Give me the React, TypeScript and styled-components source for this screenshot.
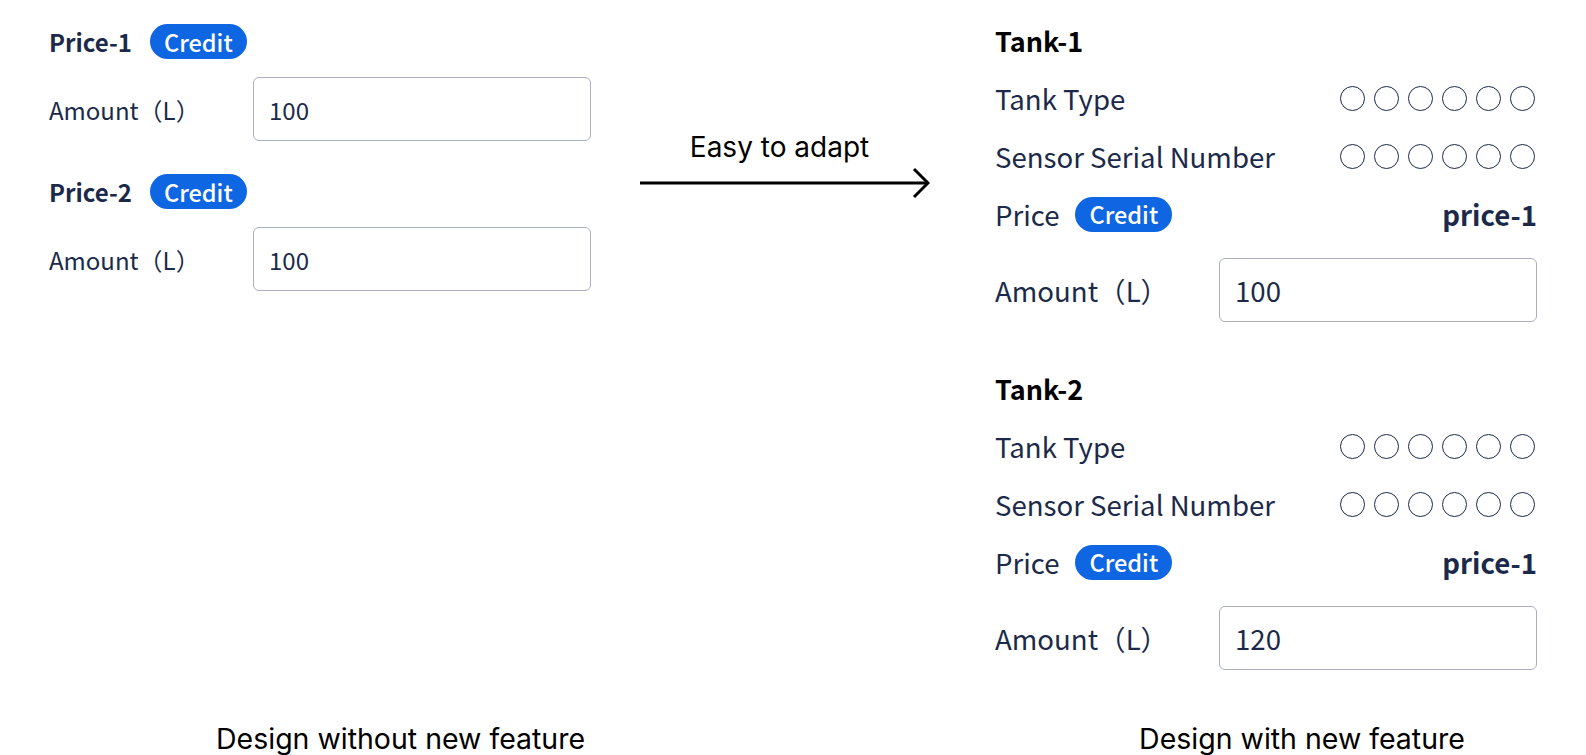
import styled, { createGlobalStyle } from 'styled-components';

const GlobalStyle = createGlobalStyle`
  html, body {
    margin: 0;
    padding: 0;
    background: #fff;
  }
  body {
    font-family: 'Noto Sans CJK SC', 'Noto Sans', sans-serif;
    color: #1b2a4a;
  }
`;

const NAVY = '#1b2a4a';
const BLUE = '#0f66e3';

const Page = styled.div`
  width: 1586px;
  height: 755px;
  box-sizing: border-box;
  padding: 24px 49px 0 49px;
  display: flex;
  flex-direction: column;
`;

const Top = styled.div`
  display: grid;
  grid-template-columns: 542px 49px 290px 65px 542px;
`;

const LeftCol = styled.div`
  grid-column: 1;
  display: flex;
  flex-direction: column;
  gap: 33px;
`;

const PriceGroup = styled.div`
  display: flex;
  flex-direction: column;
  gap: 18px;
`;

const HeaderRow = styled.div`
  display: flex;
  align-items: center;
  gap: 18px;
  height: 35px;
`;

const PriceName = styled.span`
  font-size: 24px;
  font-weight: 700;
  color: ${NAVY};
`;

const Badge = styled.span`
  display: inline-flex;
  align-items: center;
  justify-content: center;
  height: 35px;
  padding: 0 14px;
  box-sizing: border-box;
  border-radius: 18px;
  background: ${BLUE};
  color: #fff;
  font-size: 23.5px;
  font-weight: 500;
`;

const FieldRow = styled.div<{ $label: number; $size: number }>`
  display: grid;
  grid-template-columns: ${(p) => p.$label}px 1fr;
  align-items: center;
  font-size: ${(p) => p.$size}px;
  color: ${NAVY};
`;

const Field = styled.div`
  height: 64px;
  box-sizing: border-box;
  border: 1.8px solid #abb0bf;
  border-radius: 6px;
  padding: 0 15px;
  display: flex;
  align-items: center;
  color: ${NAVY};
`;

const MidCol = styled.div`
  grid-column: 3;
  display: flex;
  flex-direction: column;
  align-items: center;
  padding-top: 106px;
  gap: 2px;
`;

const AdaptText = styled.div`
  font-family: Inter, 'Liberation Sans', sans-serif;
  font-size: 28px;
  font-weight: 400;
  color: #000;
  line-height: 34px;
  margin-left: -11px;
`;

const RightCol = styled.div`
  grid-column: 5;
  display: flex;
  flex-direction: column;
  gap: 50px;
`;

const Tank = styled.div`
  display: flex;
  flex-direction: column;
`;

const TankTitle = styled.div`
  height: 36px;
  margin-top: -2px;
  display: flex;
  align-items: center;
  font-size: 27px;
  font-weight: 700;
  color: #000;
`;

const InfoRow = styled.div`
  height: 36px;
  margin-top: 22px;
  display: flex;
  align-items: center;
  justify-content: space-between;
  font-size: 27.6px;
  color: ${NAVY};
`;

const LabelWithBadge = styled.div`
  display: flex;
  align-items: center;
  gap: 16px;
`;

const Strong = styled.span`
  font-weight: 700;
`;

const Dots = styled.div`
  display: flex;
  gap: 9px;
  margin-right: 2px;
`;

const Dot = styled.span`
  width: 25px;
  height: 25px;
  box-sizing: border-box;
  border: 1.4px solid ${NAVY};
  border-radius: 50%;
`;

const TankField = styled.div`
  margin-top: 26px;
`;

const Captions = styled.div`
  margin-top: auto;
  height: 36px;
  display: flex;
`;

const Caption = styled.div<{ $left: number }>`
  margin-left: ${(p) => p.$left}px;
  font-family: Inter, 'Liberation Sans', sans-serif;
  font-size: 28.5px;
  font-weight: 400;
  color: #000;
  line-height: 40px;
  white-space: nowrap;
`;

const Arrow = () => (
  <svg width="290" height="34" viewBox="0 0 290 34" fill="none">
    <line x1="0" y1="17" x2="288" y2="17" stroke="#000" strokeWidth="3" />
    <polyline points="274,3 288,17 274,31" stroke="#000" strokeWidth="3" fill="none" />
  </svg>
);

const DotRow = () => (
  <Dots>
    {Array.from({ length: 6 }).map((_, i) => (
      <Dot key={i} />
    ))}
  </Dots>
);

const prices = [
  { name: 'Price-1', value: '100' },
  { name: 'Price-2', value: '100' },
];

const tanks = [
  { name: 'Tank-1', value: '100' },
  { name: 'Tank-2', value: '120' },
];

const App = () => {
  return (
    <>
      <GlobalStyle />
      <Page>
        <Top>
          <LeftCol>
            {prices.map((p) => (
              <PriceGroup key={p.name}>
                <HeaderRow>
                  <PriceName>{p.name}</PriceName>
                  <Badge>Credit</Badge>
                </HeaderRow>
                <FieldRow $label={204} $size={24}>
                  <span>Amount（L）</span>
                  <Field>{p.value}</Field>
                </FieldRow>
              </PriceGroup>
            ))}
          </LeftCol>

          <MidCol>
            <AdaptText>Easy to adapt</AdaptText>
            <Arrow />
          </MidCol>

          <RightCol>
            {tanks.map((t) => (
              <Tank key={t.name}>
                <TankTitle>{t.name}</TankTitle>
                <InfoRow>
                  <span>Tank Type</span>
                  <DotRow />
                </InfoRow>
                <InfoRow>
                  <span>Sensor Serial Number</span>
                  <DotRow />
                </InfoRow>
                <InfoRow>
                  <LabelWithBadge>
                    <span>Price</span>
                    <Badge>Credit</Badge>
                  </LabelWithBadge>
                  <Strong>price-1</Strong>
                </InfoRow>
                <TankField>
                  <FieldRow $label={224} $size={27.6}>
                    <span>Amount（L）</span>
                    <Field>{t.value}</Field>
                  </FieldRow>
                </TankField>
              </Tank>
            ))}
          </RightCol>
        </Top>
        <Captions>
          <Caption $left={167}>Design without new feature</Caption>
          <Caption $left={554}>Design with new feature</Caption>
        </Captions>
      </Page>
    </>
  );
};

export default App;
